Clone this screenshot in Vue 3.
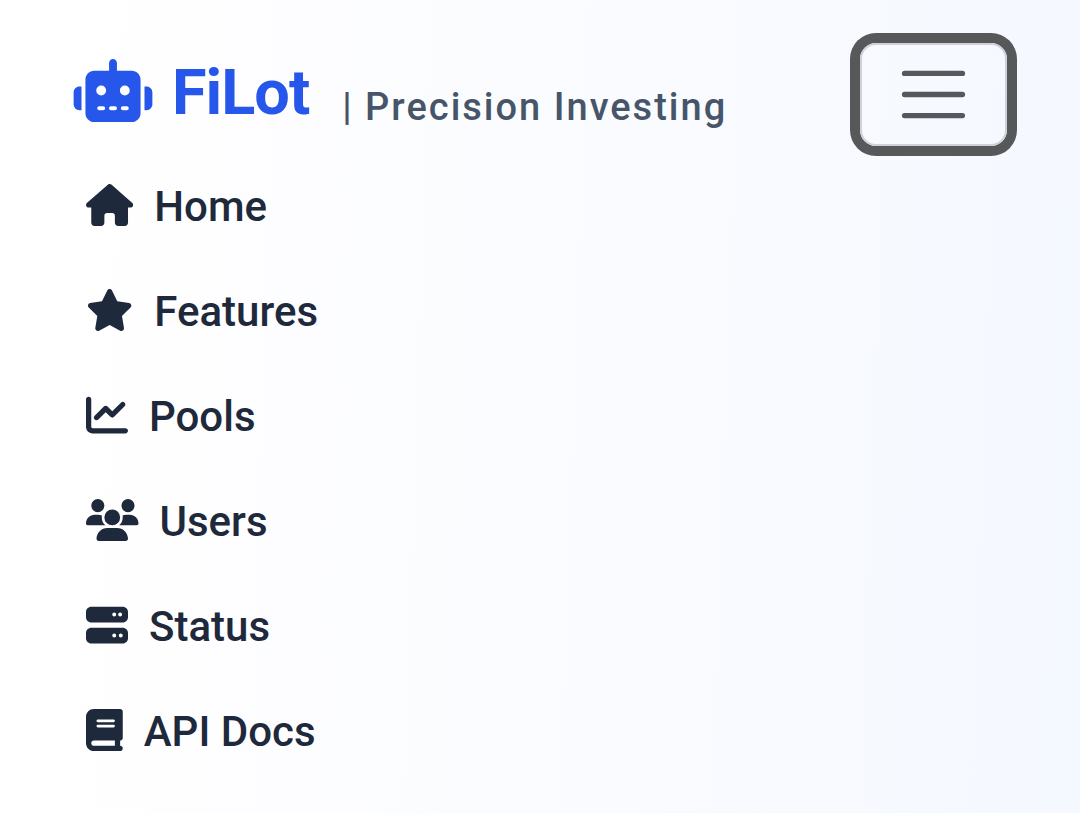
<script setup>
const items = [
  { label: 'Home', width: 576, path: 'M575.8 255.5c0 18-15 32.1-32 32.1l-32 0 .7 160.2c0 2.7-.2 5.4-.5 8.1l0 16.2c0 22.1-17.9 40-40 40l-16 0c-1.1 0-2.2 0-3.3-.1c-1.4 .1-2.8 .1-4.2 .1L416 512l-24 0c-22.1 0-40-17.9-40-40l0-24 0-64c0-17.7-14.3-32-32-32l-64 0c-17.7 0-32 14.3-32 32l0 64 0 24c0 22.1-17.9 40-40 40l-24 0-31.9 0c-1.5 0-3-.1-4.5-.2c-1.2 .1-2.4 .2-3.6 .2l-16 0c-22.1 0-40-17.9-40-40l0-112c0-.9 0-1.9 .1-2.8l0-69.7-32 0c-18 0-32-14-32-32.1c0-9 3-17 10-24L266.4 8c7-7 15-8 22-8s15 2 21 7L564.8 231.5c8 7 12 15 11 24z' },
  { label: 'Features', width: 576, path: 'M316.9 18C311.6 7 300.4 0 288.1 0s-23.4 7-28.8 18L195 150.3 51.4 171.5c-12 1.8-22 10.2-25.7 21.7s-.7 24.2 7.9 32.7L137.8 329 113.2 474.7c-2 12 3 24.2 12.9 31.3s23 8 33.8 2.3l128.3-68.5 128.3 68.5c10.8 5.7 23.9 4.9 33.8-2.3s14.9-19.3 12.9-31.3L438.5 329 542.7 225.9c8.6-8.5 11.7-21.2 7.9-32.7s-13.7-19.9-25.7-21.7L381.2 150.3 316.9 18z' },
  { label: 'Pools', width: 512, path: 'M64 64c0-17.7-14.3-32-32-32S0 46.3 0 64L0 400c0 44.2 35.8 80 80 80l400 0c17.7 0 32-14.3 32-32s-14.3-32-32-32L80 416c-8.8 0-16-7.2-16-16L64 64zm406.6 86.6c12.5-12.5 12.5-32.8 0-45.3s-32.8-12.5-45.3 0L320 210.7l-57.4-57.4c-12.5-12.5-32.8-12.5-45.3 0l-112 112c-12.5 12.5-12.5 32.8 0 45.3s32.8 12.5 45.3 0L240 221.3l57.4 57.4c12.5 12.5 32.8 12.5 45.3 0l128-128z' },
  { label: 'Users', width: 640, path: 'M144 0a80 80 0 1 1 0 160A80 80 0 1 1 144 0zM512 0a80 80 0 1 1 0 160A80 80 0 1 1 512 0zM0 298.7C0 239.8 47.8 192 106.7 192l42.7 0c15.9 0 31 3.5 44.6 9.7c-1.3 7.2-1.9 14.7-1.9 22.3c0 38.2 16.8 72.5 43.3 96c-.2 0-.4 0-.7 0L21.3 320C9.6 320 0 310.4 0 298.7zM405.3 320c-.2 0-.4 0-.7 0c26.6-23.5 43.3-57.8 43.3-96c0-7.6-.7-15-1.9-22.3c13.6-6.3 28.7-9.7 44.6-9.7l42.7 0C592.2 192 640 239.8 640 298.7c0 11.8-9.6 21.3-21.3 21.3l-213.3 0zM224 224a96 96 0 1 1 192 0 96 96 0 1 1 -192 0zM128 485.3C128 411.7 187.7 352 261.3 352l117.3 0C452.3 352 512 411.7 512 485.3c0 14.7-11.9 26.7-26.7 26.7l-330.7 0c-14.7 0-26.7-11.9-26.7-26.7z' },
  { label: 'Status', width: 512, path: 'M64 32C28.7 32 0 60.7 0 96l0 64c0 35.3 28.7 64 64 64l384 0c35.3 0 64-28.7 64-64l0-64c0-35.3-28.7-64-64-64L64 32zm280 72a24 24 0 1 1 0 48 24 24 0 1 1 0-48zm48 24a24 24 0 1 1 48 0 24 24 0 1 1 -48 0zM64 288c-35.3 0-64 28.7-64 64l0 64c0 35.3 28.7 64 64 64l384 0c35.3 0 64-28.7 64-64l0-64c0-35.3-28.7-64-64-64L64 288zm280 72a24 24 0 1 1 0 48 24 24 0 1 1 0-48zm56 24a24 24 0 1 1 48 0 24 24 0 1 1 -48 0z' },
  { label: 'API Docs', width: 448, path: 'M96 0C43 0 0 43 0 96L0 416c0 53 43 96 96 96l288 0 32 0c17.7 0 32-14.3 32-32s-14.3-32-32-32l0-64c17.7 0 32-14.3 32-32l0-320c0-17.7-14.3-32-32-32L384 0 96 0zm0 384l256 0 0 64L96 448c-17.7 0-32-14.3-32-32s14.3-32 32-32zm32-240c0-8.8 7.2-16 16-16l192 0c8.8 0 16 7.2 16 16s-7.2 16-16 16l-192 0c-8.8 0-16-7.2-16-16zm16 48l192 0c8.8 0 16 7.2 16 16s-7.2 16-16 16l-192 0c-8.8 0-16-7.2-16-16s7.2-16 16-16z' }
]
</script>

<template>
  <div class="navbar">
    <header class="bar">
      <a class="brand" href="#">
        <svg class="robot" viewBox="0 0 640 512" aria-hidden="true">
          <path d="M320 0c17.7 0 32 14.3 32 32l0 64 120 0c39.8 0 72 32.2 72 72l0 272c0 39.8-32.2 72-72 72l-304 0c-39.8 0-72-32.2-72-72l0-272c0-39.8 32.2-72 72-72l120 0 0-64c0-17.7 14.3-32 32-32zM208 384c-8.8 0-16 7.2-16 16s7.2 16 16 16l32 0c8.8 0 16-7.2 16-16s-7.2-16-16-16l-32 0zm96 0c-8.8 0-16 7.2-16 16s7.2 16 16 16l32 0c8.8 0 16-7.2 16-16s-7.2-16-16-16l-32 0zm96 0c-8.8 0-16 7.2-16 16s7.2 16 16 16l32 0c8.8 0 16-7.2 16-16s-7.2-16-16-16l-32 0zM264 256a40 40 0 1 0 -80 0 40 40 0 1 0 80 0zm152 40a40 40 0 1 0 0-80 40 40 0 1 0 0 80zM48 224l16 0 0 192-16 0c-26.5 0-48-21.5-48-48l0-96c0-26.5 21.5-48 48-48zm544 0c26.5 0 48 21.5 48 48l0 96c0 26.5-21.5 48-48 48l-16 0 0-192 16 0z" />
        </svg>
        <span class="name">FiLot</span>
        <span class="tagline">| Precision Investing</span>
      </a>
      <button class="toggler" type="button" aria-label="Toggle navigation" aria-expanded="true">
        <svg viewBox="0 0 30 30" aria-hidden="true">
          <path d="M4 7h22M4 15h22M4 23h22" />
        </svg>
      </button>
    </header>
    <nav>
      <ul class="menu">
        <li v-for="item in items" :key="item.label">
          <a class="link" href="#">
            <svg class="icon" :viewBox="`0 0 ${item.width} 512`" aria-hidden="true">
              <path :d="item.path" />
            </svg>{{ item.label }}
          </a>
        </li>
      </ul>
    </nav>
  </div>
</template>

<style>
body {
  margin: 0;
}
</style>

<style scoped>
.navbar {
  box-sizing: border-box;
  min-height: 100vh;
  padding: 43px 73px 0;
  background: linear-gradient(92deg, #ffffff 4%, #fafbff 60%, #f4f8ff 100%);
  font-family: Roboto, "Liberation Sans", sans-serif;
  color: #1e293b;
}

.bar {
  display: flex;
  align-items: center;
  justify-content: space-between;
}

.brand {
  display: flex;
  align-items: center;
  color: #2756ea;
  text-decoration: none;
}

.robot {
  height: 63px;
  width: 80px;
  margin: 0 19px 8px 0;
  fill: currentColor;
}

.name {
  margin-bottom: 4px;
  font-size: 63px;
  line-height: 80px;
  font-weight: 700;
  letter-spacing: -1px;
}

.tagline {
  margin-left: 33px;
  padding-top: 24px;
  font-size: 38px;
  line-height: 48px;
  font-weight: 500;
  letter-spacing: 2px;
  color: #475569;
}

.toggler {
  display: flex;
  padding: 10px 32px;
  border: 2px solid #cfd1d8;
  border-radius: 16px;
  outline: none;
  background: transparent;
  box-shadow: 0 0 0 10px #565859;
}

.toggler svg {
  width: 79px;
  height: 79px;
  fill: none;
  stroke: #55585d;
  stroke-width: 2;
  stroke-linecap: round;
}

.menu {
  margin: 8px 0 0;
  padding: 0 13px;
  list-style: none;
}

.link {
  display: block;
  padding: 21px 0;
  font-size: 42px;
  line-height: 63px;
  font-weight: 500;
  color: inherit;
  text-decoration: none;
}

.icon {
  height: 42px;
  margin-right: 21px;
  vertical-align: -5px;
  fill: currentColor;
}
</style>
